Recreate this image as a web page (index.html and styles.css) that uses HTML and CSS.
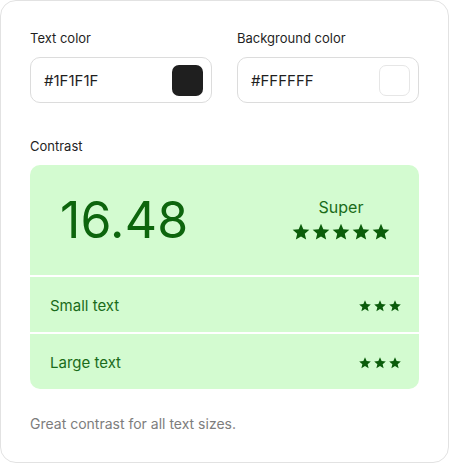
FILE: index.html
```html
<!DOCTYPE html>
<html>
<head>
<meta charset="utf-8">
<link rel="stylesheet" href="styles.css">
</head>
<body>
<div class="card">
  <div class="fields">
    <div class="field">
      <div class="label">Text color</div>
      <div class="input"><span class="value">#1F1F1F</span><span class="swatch swatch-dark"></span></div>
    </div>
    <div class="field">
      <div class="label">Background color</div>
      <div class="input"><span class="value">#FFFFFF</span><span class="swatch swatch-light"></span></div>
    </div>
  </div>
  <div class="label contrast-label">Contrast</div>
  <div class="result">
    <div class="top">
      <div class="ratio">16.48</div>
      <div class="rating">
        <div class="rating-text">Super</div>
        <div class="stars big">
          <svg viewBox="0 0 24 24"><path d="M12 17.27L18.18 21l-1.64-7.03L22 9.24l-7.19-.61L12 2 9.19 8.63 2 9.24l5.46 4.73L5.82 21z"/></svg>
          <svg viewBox="0 0 24 24"><path d="M12 17.27L18.18 21l-1.64-7.03L22 9.24l-7.19-.61L12 2 9.19 8.63 2 9.24l5.46 4.73L5.82 21z"/></svg>
          <svg viewBox="0 0 24 24"><path d="M12 17.27L18.18 21l-1.64-7.03L22 9.24l-7.19-.61L12 2 9.19 8.63 2 9.24l5.46 4.73L5.82 21z"/></svg>
          <svg viewBox="0 0 24 24"><path d="M12 17.27L18.18 21l-1.64-7.03L22 9.24l-7.19-.61L12 2 9.19 8.63 2 9.24l5.46 4.73L5.82 21z"/></svg>
          <svg viewBox="0 0 24 24"><path d="M12 17.27L18.18 21l-1.64-7.03L22 9.24l-7.19-.61L12 2 9.19 8.63 2 9.24l5.46 4.73L5.82 21z"/></svg>
        </div>
      </div>
    </div>
    <div class="row">
      <span class="row-text">Small text</span>
      <div class="stars small">
        <svg viewBox="0 0 24 24"><path d="M12 17.27L18.18 21l-1.64-7.03L22 9.24l-7.19-.61L12 2 9.19 8.63 2 9.24l5.46 4.73L5.82 21z"/></svg>
        <svg viewBox="0 0 24 24"><path d="M12 17.27L18.18 21l-1.64-7.03L22 9.24l-7.19-.61L12 2 9.19 8.63 2 9.24l5.46 4.73L5.82 21z"/></svg>
        <svg viewBox="0 0 24 24"><path d="M12 17.27L18.18 21l-1.64-7.03L22 9.24l-7.19-.61L12 2 9.19 8.63 2 9.24l5.46 4.73L5.82 21z"/></svg>
      </div>
    </div>
    <div class="row">
      <span class="row-text">Large text</span>
      <div class="stars small">
        <svg viewBox="0 0 24 24"><path d="M12 17.27L18.18 21l-1.64-7.03L22 9.24l-7.19-.61L12 2 9.19 8.63 2 9.24l5.46 4.73L5.82 21z"/></svg>
        <svg viewBox="0 0 24 24"><path d="M12 17.27L18.18 21l-1.64-7.03L22 9.24l-7.19-.61L12 2 9.19 8.63 2 9.24l5.46 4.73L5.82 21z"/></svg>
        <svg viewBox="0 0 24 24"><path d="M12 17.27L18.18 21l-1.64-7.03L22 9.24l-7.19-.61L12 2 9.19 8.63 2 9.24l5.46 4.73L5.82 21z"/></svg>
      </div>
    </div>
  </div>
  <div class="note">Great contrast for all text sizes.</div>
</div>
</body>
</html>
```
FILE: styles.css
```css
* { box-sizing: border-box; }
html, body { margin: 0; padding: 0; background: #ffffff; }
body { font-family: Inter, "Noto Sans", sans-serif; color: #1f1f1f; }

.card {
  width: 449px;
  height: 463px;
  border: 1px solid #e2e2e2;
  border-radius: 16px;
  padding: 29px 29px 0 29px;
  background: #fff;
}

.fields {
  display: grid;
  grid-template-columns: 182px 182px;
  column-gap: 25px;
}

.label {
  font-size: 13px;
  line-height: 16px;
  color: #1f1f1f;
}

.input {
  margin-top: 11px;
  height: 46px;
  border: 1px solid #dcdcdc;
  border-radius: 10px;
  display: flex;
  align-items: center;
  justify-content: space-between;
  padding: 0 8px 0 13px;
}

.value { font-size: 15px; color: #1f1f1f; }

.swatch {
  width: 31px;
  height: 31px;
  border-radius: 7px;
}
.swatch-dark { background: #1f1f1f; }
.swatch-light { background: #ffffff; border: 1px solid #e6e6e6; }

.contrast-label { margin-top: 35px; }

.result {
  margin-top: 11px;
  width: 389px;
  border-radius: 10px;
  overflow: hidden;
  display: flex;
  flex-direction: column;
  gap: 2px;
  background: #ffffff;
}

.top {
  height: 110px;
  background: #d3fbd0;
  display: flex;
  align-items: center;
  justify-content: space-between;
  padding: 0 28px 0 30px;
}

.ratio {
  font-size: 50px;
  line-height: 56px;
  color: #0d650d;
  letter-spacing: 0.2px;
}

.rating {
  display: flex;
  flex-direction: column;
  align-items: center;
  gap: 5px;
  margin-top: -2px;
}

.rating-text {
  font-size: 16px;
  line-height: 20px;
  color: #1a6b1a;
}

.stars { display: flex; fill: #0b5c0b; }
.stars.big svg { width: 20px; height: 20px; }
.stars.small { gap: 1px; }
.stars.small svg { width: 14px; height: 14px; }

.row {
  height: 55px;
  background: #d3fbd0;
  display: flex;
  align-items: center;
  justify-content: space-between;
  padding: 2px 17px 0 20px;
}

.row-text {
  font-size: 15px;
  color: #1a6b1a;
}

.note {
  margin-top: 25px;
  font-size: 14px;
  line-height: 20px;
  color: #7d7d7d;
}
```
